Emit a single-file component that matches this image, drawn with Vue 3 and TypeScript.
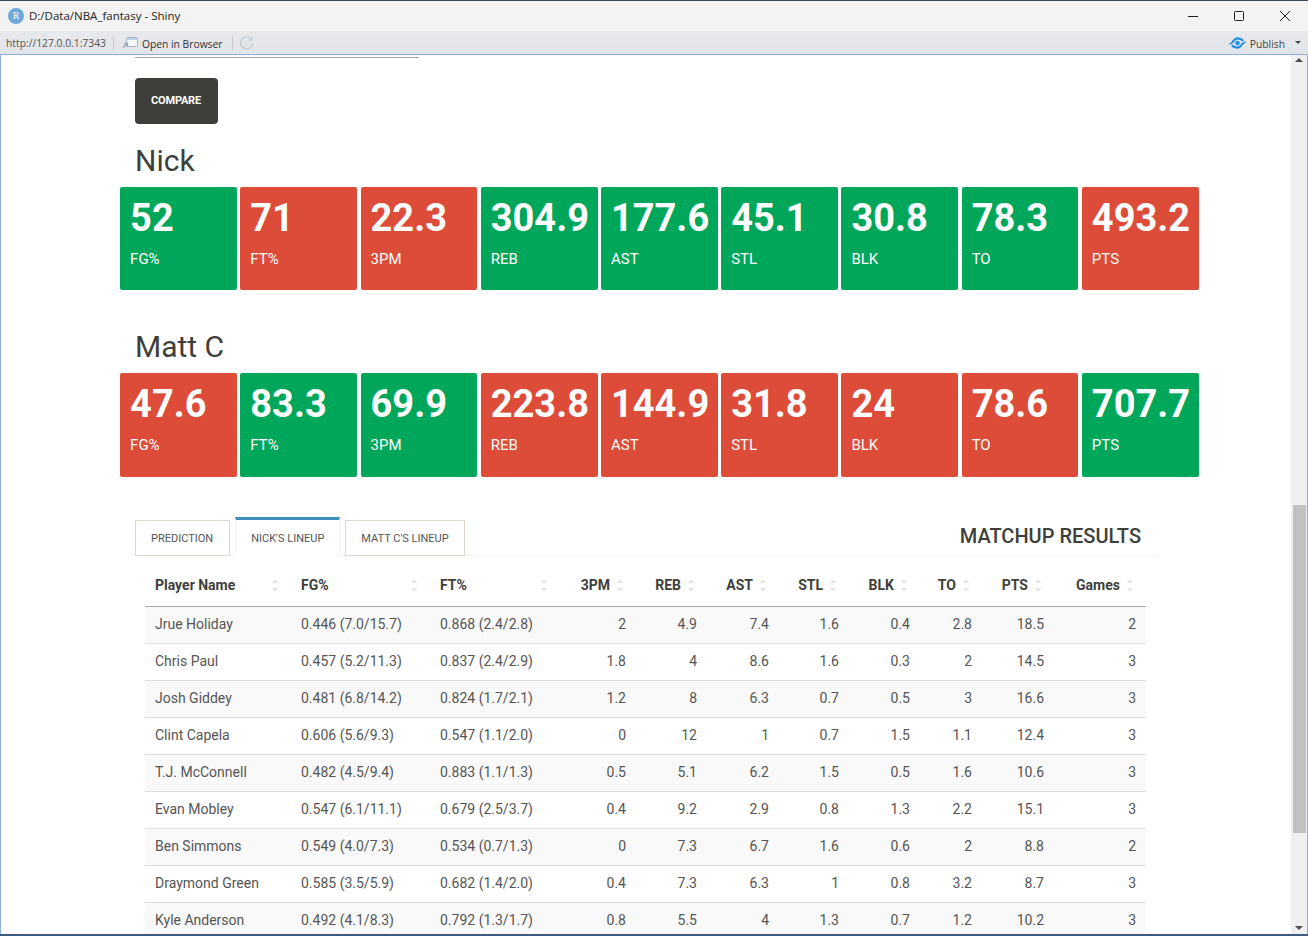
<template>
  <div class="window">
    <div class="titlebar">
      <span class="r-logo">R</span>
      <span class="title">D:/Data/NBA_fantasy - Shiny</span>
      <div class="win-buttons">
        <svg width="12" height="12" viewBox="0 0 12 12"><path d="M1 6.500h10" stroke="#222" fill="none" /></svg>
        <svg width="12" height="12" viewBox="0 0 12 12"><rect x="1.500" y="1.500" width="9" height="9" rx="1" stroke="#222" fill="none" /></svg>
        <svg width="12" height="12" viewBox="0 0 12 12"><path d="M1 1l10 10M11 1L1 11" stroke="#222" fill="none" /></svg>
      </div>
    </div>
    <div class="toolbar">
      <span class="url">http://127.0.0.1:7343</span>
      <span class="sep"></span>
      <svg class="open-icon" width="16" height="11" viewBox="0 0 16 11">
        <rect x="4.500" y="0.500" width="11" height="9" rx="1" fill="#f6f8fb" stroke="#aab4bf" />
        <path d="M5 1h10v2H5z" fill="#bcd4ee" />
        <path d="M1 10.500l4-4M2.500 6.500H5.500V9.500" stroke="#9aa5b1" stroke-width="1.300" fill="none" />
      </svg>
      <span class="open-text">Open in Browser</span>
      <span class="sep"></span>
      <svg class="refresh" width="15" height="15" viewBox="0 0 15 15">
        <path d="M12.500 4.500A6 6 0 1 0 13.500 8" stroke="#c3cbd4" stroke-width="1.400" fill="none" />
        <path d="M13 1.500v3.500H9.500" stroke="#c3cbd4" stroke-width="1.200" fill="none" />
        <circle cx="7.500" cy="7.500" r="2.500" stroke="#dde2e8" fill="none" />
      </svg>
      <div class="publish">
        <svg width="17" height="12" viewBox="0 0 17 12">
          <circle cx="8.500" cy="6" r="2.300" fill="#1f8fe0" />
          <path id="swoosh" d="M0 6.500C3 6.500 4 0.300 8.500 0.300 11 0.300 13.500 1.300 15 3.500L13 4.500C12 3.200 10.500 2.500 8.500 2.500 5.500 2.500 5 7.500 0 7.500z" fill="#1f8fe0" />
          <path d="M0 6.500C3 6.500 4 0.300 8.500 0.300 11 0.300 13.500 1.300 15 3.500L13 4.500C12 3.200 10.500 2.500 8.500 2.500 5.500 2.500 5 7.500 0 7.500z" fill="#1f8fe0" transform="rotate(180 8.500 6)" />
        </svg>
        <span>Publish</span>
        <i class="caret"></i>
      </div>
    </div>

    <div class="viewport">
      <main class="page">
        <div class="rule"></div>
        <button class="compare">COMPARE</button>

        <template v-for="(team, t) in teams" :key="team.name">
          <h2 class="team-name">{{ team.name }}</h2>
          <div class="boxes" :class="{ tall: t === 1 }">
            <div
              v-for="stat in team.stats"
              :key="stat.label"
              class="box"
              :class="stat.win ? 'green' : 'red'"
            >
              <div class="value">{{ stat.value }}</div>
              <div class="label">{{ stat.label }}</div>
            </div>
          </div>
        </template>

        <div class="tabbox">
          <div class="tabs">
            <a class="tab first">PREDICTION</a>
            <a class="tab active">NICK'S LINEUP</a>
            <a class="tab">MATT C'S LINEUP</a>
            <div class="results-title">MATCHUP RESULTS</div>
          </div>
          <table class="lineup">
            <colgroup>
              <col v-for="(w, i) in colWidths" :key="i" :style="{ width: w + 'px' }" />
            </colgroup>
            <thead>
              <tr>
                <th v-for="(h, i) in headers" :key="h" :class="{ num: i > 2 }">
                  {{ h }}<span class="sort" :class="{ far: i < 3 }"></span>
                </th>
              </tr>
            </thead>
            <tbody>
              <tr v-for="row in rows" :key="row[0]">
                <td v-for="(c, i) in row" :key="i" :class="{ num: i > 2 }">{{ c }}</td>
              </tr>
            </tbody>
          </table>
        </div>
      </main>

      <div class="scrollbar">
        <i class="arrow up"></i>
        <div class="thumb"></div>
        <i class="arrow down"></i>
      </div>
    </div>
  </div>
</template>

<script setup lang="ts">
interface Stat {
  value: string
  label: string
  win: boolean
}

const labels = ['FG%', 'FT%', '3PM', 'REB', 'AST', 'STL', 'BLK', 'TO', 'PTS']

function makeStats(values: string[], wins: number[]): Stat[] {
  return values.map((value, i) => ({ value, label: labels[i], win: wins[i] === 1 }))
}

const teams = [
  {
    name: 'Nick',
    stats: makeStats(
      ['52', '71', '22.3', '304.9', '177.6', '45.1', '30.8', '78.3', '493.2'],
      [1, 0, 0, 1, 1, 1, 1, 1, 0]
    )
  },
  {
    name: 'Matt C',
    stats: makeStats(
      ['47.6', '83.3', '69.9', '223.8', '144.9', '31.8', '24', '78.6', '707.7'],
      [0, 1, 1, 0, 0, 0, 0, 0, 1]
    )
  }
]

const colWidths = [146, 139, 130, 76, 71, 72, 70, 71, 62, 72, 92]
const headers = ['Player Name', 'FG%', 'FT%', '3PM', 'REB', 'AST', 'STL', 'BLK', 'TO', 'PTS', 'Games']

const rows = [
  ['Jrue Holiday', '0.446 (7.0/15.7)', '0.868 (2.4/2.8)', '2', '4.9', '7.4', '1.6', '0.4', '2.8', '18.5', '2'],
  ['Chris Paul', '0.457 (5.2/11.3)', '0.837 (2.4/2.9)', '1.8', '4', '8.6', '1.6', '0.3', '2', '14.5', '3'],
  ['Josh Giddey', '0.481 (6.8/14.2)', '0.824 (1.7/2.1)', '1.2', '8', '6.3', '0.7', '0.5', '3', '16.6', '3'],
  ['Clint Capela', '0.606 (5.6/9.3)', '0.547 (1.1/2.0)', '0', '12', '1', '0.7', '1.5', '1.1', '12.4', '3'],
  ['T.J. McConnell', '0.482 (4.5/9.4)', '0.883 (1.1/1.3)', '0.5', '5.1', '6.2', '1.5', '0.5', '1.6', '10.6', '3'],
  ['Evan Mobley', '0.547 (6.1/11.1)', '0.679 (2.5/3.7)', '0.4', '9.2', '2.9', '0.8', '1.3', '2.2', '15.1', '3'],
  ['Ben Simmons', '0.549 (4.0/7.3)', '0.534 (0.7/1.3)', '0', '7.3', '6.7', '1.6', '0.6', '2', '8.8', '2'],
  ['Draymond Green', '0.585 (3.5/5.9)', '0.682 (1.4/2.0)', '0.4', '7.3', '6.3', '1', '0.8', '3.2', '8.7', '3'],
  ['Kyle Anderson', '0.492 (4.1/8.3)', '0.792 (1.3/1.7)', '0.8', '5.5', '4', '1.3', '0.7', '1.2', '10.2', '3']
]
</script>

<style>
html,
body {
  margin: 0;
  height: 100%;
  overflow: hidden;
}
</style>

<style scoped>
.window {
  width: 1308px;
  height: 936px;
  display: flex;
  flex-direction: column;
  overflow: hidden;
  box-sizing: border-box;
  border-top: 1px solid #3d4a57;
  border-bottom: 2px solid #3d5a80;
  font-family: Roboto, "Liberation Sans", sans-serif;
  color: #333;
  background: #fff;
}

.titlebar {
  height: 30px;
  flex: none;
  display: flex;
  align-items: center;
  padding-left: 8px;
  background: #f3f3f3;
  font-family: "Open Sans", "Liberation Sans", sans-serif;
}

.r-logo {
  width: 16px;
  height: 16px;
  border-radius: 50%;
  background: #6fa8dc;
  color: #fff;
  font: 10px/16px "Liberation Serif", serif;
  text-align: center;
}

.title {
  margin: -2px 0 0 5px;
  font-size: 11.5px;
  color: #222;
}

.win-buttons {
  margin-left: auto;
  display: flex;
  gap: 34px;
  padding-right: 17px;
}

.toolbar {
  height: 23px;
  flex: none;
  display: flex;
  align-items: center;
  padding-left: 6px;
  background: linear-gradient(#e8e9ec, #e1e4e9);
  border-bottom: 1px solid #8fb0dc;
  font-family: "Open Sans", "Liberation Sans", sans-serif;
  font-size: 10.3px;
}

.url {
  margin-right: -1px;
  color: #555;
}

.sep {
  width: 1px;
  height: 14px;
  background: #c5c8cc;
  margin-left: 8px;
}

.open-icon {
  margin-left: 8px;
}

.open-text {
  margin: 2px 1px 0 4px;
  color: #333;
}

.refresh {
  margin-left: 6px;
}

.publish {
  margin-left: auto;
  display: flex;
  align-items: center;
  padding-right: 7px;
  color: #444;
}

.publish span {
  margin: 2px 0 0 4px;
}

.caret {
  width: 0;
  height: 0;
  margin-left: 10px;
  border: 3px solid transparent;
  border-top: 3px solid #444;
  border-bottom: 0;
}

.viewport {
  flex: 1;
  min-height: 0;
  display: flex;
  border-left: 1px solid #8fb0dc;
  border-right: 1px solid #8fb0dc;
}

.page {
  flex: 1;
  min-width: 0;
  overflow: hidden;
  padding: 2px 0 0 119px;
}

.rule {
  width: 284px;
  height: 1px;
  margin-left: 15px;
  background: #aaa;
}

.compare {
  display: block;
  width: 83px;
  height: 46px;
  margin: 20px 0 0 15px;
  padding: 0 1px 2px 0;
  border: none;
  border-radius: 4px;
  background: #3e3f3a;
  color: #fff;
  font: 700 11px Roboto, sans-serif;
  letter-spacing: -0.2px;
}

.team-name {
  margin: 20px 0 10px 15px;
  height: 33px;
  font-size: 30px;
  line-height: 33px;
  font-weight: 400;
  color: #3e3f3a;
}

.boxes {
  display: grid;
  grid-template-columns: repeat(9, 116.8px);
  column-gap: 3.43px;
  margin: 0 0 40px 0.1px;
}

.boxes.tall {
  margin-bottom: 39px;
}

.box {
  height: 103px;
  box-sizing: border-box;
  padding: 11px 10px 0;
  border-radius: 2px;
  color: #fff;
}

.tall .box {
  height: 104px;
}

.green {
  background: #00a65a;
}

.red {
  background: #dd4b39;
}

.value {
  font-size: 38px;
  line-height: 41px;
  font-weight: 700;
  white-space: nowrap;
}

.label {
  margin-top: 10px;
  font-size: 15px;
  line-height: 21px;
}

.tabbox {
  width: 1023px;
  margin: 0 0 0 15px;
}

.tabs {
  height: 39px;
  display: flex;
  align-items: flex-end;
  gap: 5px;
  border-bottom: 1px solid #f4f4f4;
}

.tab {
  height: 36px;
  box-sizing: border-box;
  padding: 0 15px;
  margin-bottom: -1px;
  border: 1px solid #dfd7ca;
  font-size: 11px;
  line-height: 36px;
  color: #555;
}

.tab.first {
  padding-right: 16px;
}

.tab.active {
  height: 39px;
  line-height: 38px;
  border: 1px solid #f4f4f4;
  border-top: 3px solid #3c8dbc;
  border-bottom-color: #fff;
}

.results-title {
  margin-left: auto;
  margin-right: 17px;
  align-self: center;
  font-size: 20px;
  font-weight: 500;
  color: #3e3f3a;
}

.lineup {
  width: 1001px;
  margin: 9px 0 0 10px;
  table-layout: fixed;
  border-collapse: separate;
  border-spacing: 0;
  font-size: 14px;
  color: #555;
}

th {
  height: 42px;
  padding: 0 13px 2px 10px;
  box-sizing: border-box;
  text-align: left;
  font-weight: 700;
  color: #3e3f3a;
  border-bottom: 1px solid #aaa;
  position: relative;
  white-space: nowrap;
}

th.num {
  text-align: right;
}

td {
  height: 37px;
  padding: 0 10px 3px;
  box-sizing: border-box;
  border-bottom: 1px solid #ddd;
  white-space: nowrap;
}

td.num {
  text-align: right;
}

tbody tr:nth-child(odd) {
  background: #f9f9f9;
}

.sort {
  display: inline-block;
  width: 6px;
  height: 13px;
  margin-left: 7px;
  vertical-align: -2px;
  background:
    linear-gradient(to top left, #e6e6e6 50%, transparent 50%) 0 0 / 3px 4px no-repeat,
    linear-gradient(to top right, #e6e6e6 50%, transparent 50%) 3px 0 / 3px 4px no-repeat,
    linear-gradient(to bottom left, #e6e6e6 50%, transparent 50%) 0 100% / 3px 4px no-repeat,
    linear-gradient(to bottom right, #e6e6e6 50%, transparent 50%) 3px 100% / 3px 4px no-repeat;
}

.sort.far {
  position: absolute;
  right: 13px;
  top: 14px;
  margin: 0;
}

.scrollbar {
  width: 16px;
  flex: none;
  position: relative;
  background: #f0f0f0;
}

.thumb {
  position: absolute;
  top: 450px;
  left: 2px;
  width: 13px;
  height: 328px;
  background: #c1c1c1;
}

.arrow {
  position: absolute;
  left: 4px;
  width: 0;
  height: 0;
  border: 4px solid transparent;
}

.arrow.up {
  top: 3px;
  border-top: 0;
  border-bottom: 4px solid #505050;
}

.arrow.down {
  bottom: 4px;
  border-bottom: 0;
  border-top: 4px solid #505050;
}
</style>
